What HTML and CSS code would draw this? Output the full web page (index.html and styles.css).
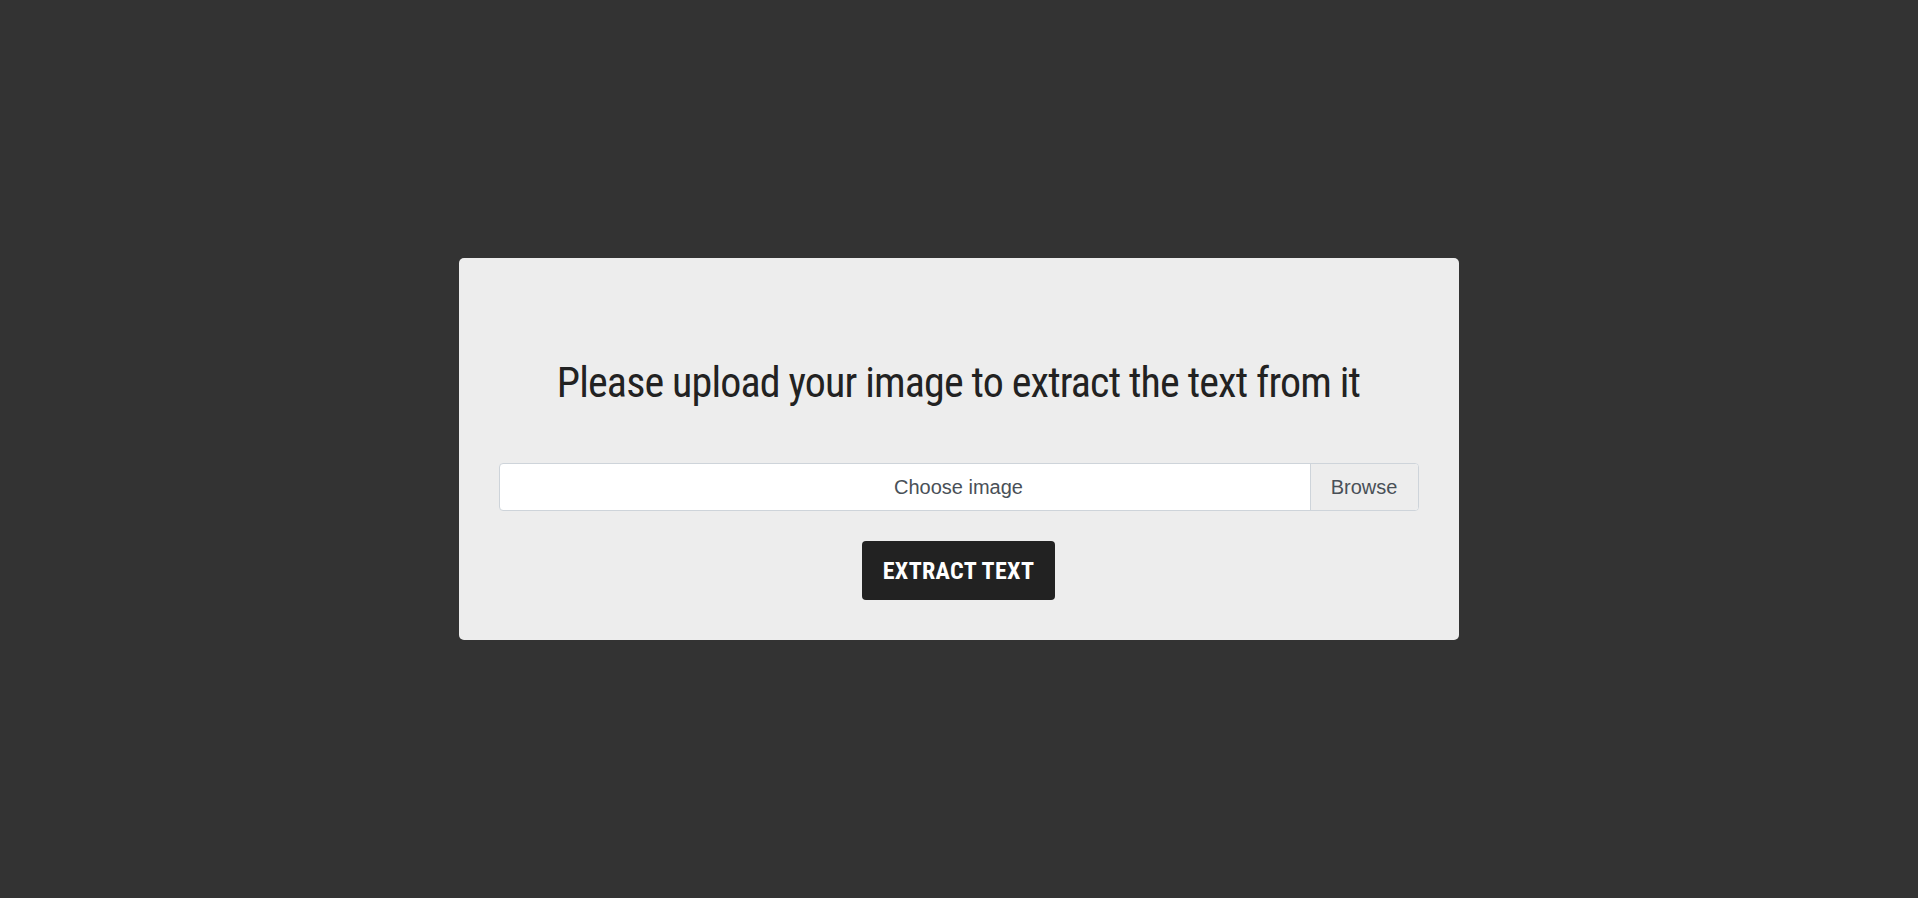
FILE: index.html
```html
<!DOCTYPE html>
<html lang="en">
<head>
<meta charset="utf-8">
<title>Extract text</title>
<link rel="stylesheet" href="styles.css">
</head>
<body>
<main class="page">
  <section class="card">
    <h1 class="title">Please upload your image to extract the text from it</h1>
    <div class="file">
      <span class="file-label">Choose image</span>
      <span class="file-browse">Browse</span>
    </div>
    <button class="btn" type="button">EXTRACT TEXT</button>
  </section>
</main>
</body>
</html>
```
FILE: styles.css
```css
html, body {
  margin: 0;
  padding: 0;
  height: 100%;
}
body {
  background: #333333;
  font-family: "Liberation Sans", Arial, sans-serif;
}
.page {
  height: 100vh;
  display: flex;
  align-items: center;
  justify-content: center;
}
.card {
  width: 1000px;
  box-sizing: border-box;
  background: #ededed;
  border-radius: 5px;
  padding: 40px;
  display: flex;
  flex-direction: column;
  align-items: center;
  margin-left: -1px;
}
.title {
  margin: 61px 0 56px;
  font-family: "Roboto Condensed", Roboto, sans-serif;
  font-stretch: condensed;
  font-weight: normal;
  font-size: 42px;
  line-height: 48px;
  letter-spacing: -0.85px;
  color: #222222;
  text-align: center;
  white-space: nowrap;
}
.file {
  position: relative;
  align-self: stretch;
  height: 48px;
  box-sizing: border-box;
  border: 1px solid #ced4da;
  border-radius: 4px;
  background: #ffffff;
  display: flex;
  align-items: center;
  justify-content: center;
  font-size: 20px;
  color: #495057;
}
.file-label {
  line-height: 30px;
}
.file-browse {
  position: absolute;
  top: 0;
  right: 0;
  bottom: 0;
  width: 108px;
  box-sizing: border-box;
  display: flex;
  align-items: center;
  justify-content: center;
  background: #ededed;
  border-left: 1px solid #ced4da;
  border-radius: 0 3px 3px 0;
}
.btn {
  margin-top: 30px;
  height: 59px;
  padding: 0 21px;
  min-width: 193px;
  border: none;
  border-radius: 4px;
  background: #222222;
  color: #ffffff;
  font-family: "Roboto Condensed", Roboto, sans-serif;
  font-stretch: condensed;
  font-weight: bold;
  font-size: 24px;
  letter-spacing: 0.35px;
  cursor: pointer;
}
```
